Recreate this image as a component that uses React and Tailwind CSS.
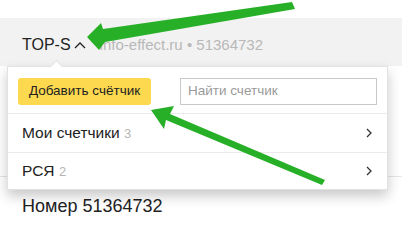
import React from 'react';

const font = { fontFamily: '"Liberation Sans", Arial, sans-serif' };

const rows = [
  { label: 'Мои счетчики', count: 3 },
  { label: 'РСЯ', count: 2 },
];

const Chevron = () => (
  <svg width="8" height="12" viewBox="0 0 8 12" className="text-[#333]">
    <polyline points="2,2 6,6 2,10" fill="none" stroke="currentColor" strokeWidth="1.3" />
  </svg>
);

export default function App() {
  return (
    <div className="relative w-[402px] h-[226px] overflow-hidden bg-white" style={font}>
      <div className="h-[18px]" />
      <header className="h-[48px] bg-[#f2f2f2] flex items-start pt-[17px] pl-[22px]">
        <span className="text-[16px] leading-[19px] text-[#222]">TOP-S</span>
        <svg width="12" height="8" viewBox="0 0 12 8" className="ml-[3px] mt-[6px] text-[#222]">
          <polyline points="1,7 6,2 11,7" fill="none" stroke="currentColor" strokeWidth="1.3" />
        </svg>
        <span className="ml-[14px] text-[15px] leading-[19px] text-[#b8b8b8]">info-effect.ru • 51364732</span>
      </header>
      <div className="h-[111px] border-b border-[#e6e6e6]" />
      <div className="pl-[22px] pt-[19px] text-[18px] leading-[20px] text-[#222]">Номер 51364732</div>

      <div className="absolute left-[7px] top-[66px] w-[381px] bg-white border border-[#e2e2e2] shadow-[0_6px_12px_rgba(0,0,0,0.22)]">
        <div className="absolute -top-[5px] left-[44px] w-[9px] h-[9px] rotate-45 bg-white border-l border-t border-[#e2e2e2]" />
        <div className="flex items-center justify-between pl-[10px] pr-[10px] pt-[11px] pb-[8px] border-b border-[#ebebeb]">
          <button className="h-[27px] w-[133px] rounded-[3px] bg-[#fcd94f] text-[13.5px] text-[#222] flex items-center justify-center">
            Добавить счётчик
          </button>
          <div className="h-[27px] w-[197px] border border-[#c9c9c9] flex items-center pl-[7px] text-[13.5px] text-[#9a9a9a]">
            Найти счетчик
          </div>
        </div>
        {rows.map((r, i) => (
          <div
            key={r.label}
            className={`flex items-center justify-between pl-[14px] pr-[14px] ${i === 0 ? 'h-[39px] border-b border-[#ebebeb]' : 'h-[36px]'}`}
          >
            <span className="text-[15.5px] text-[#222]">
              {r.label} <span className="text-[13px] text-[#b5b5b5]">{r.count}</span>
            </span>
            <Chevron />
          </div>
        ))}
      </div>

      <svg className="absolute inset-0 pointer-events-none" width="402" height="226" viewBox="0 0 402 226">
        <polygon points="87,37 101,23 103,29 292,2 295,9 105,42 99,50" fill="#27b027" />
        <polygon points="151,110 174,106 170,114 325,180 322,185 166,120 164,129" fill="#27b027" />
      </svg>
    </div>
  );
}
